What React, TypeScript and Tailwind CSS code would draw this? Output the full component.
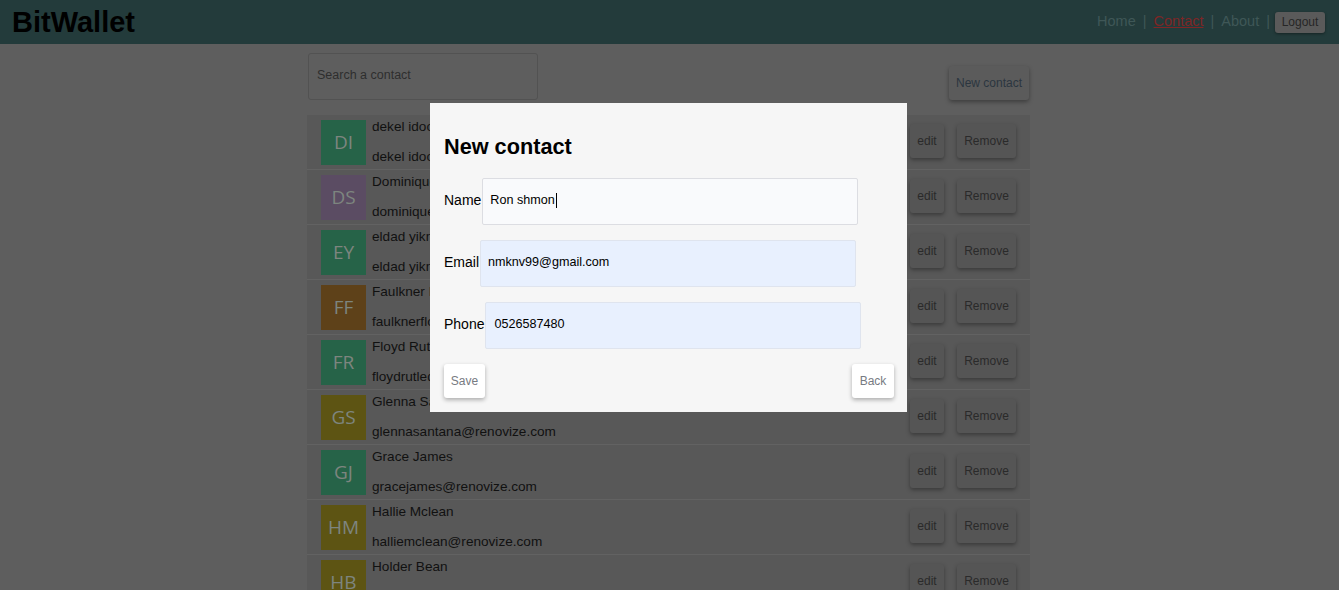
import React from "react";

const contacts = [
  { i: "DI", name: "dekel idoo", email: "dekel idoo@gmail.com", c: "bg-[#266348]" },
  { i: "DS", name: "Dominique Soto", email: "dominiquesoto@renovize.com", c: "bg-[#5b4c63]" },
  { i: "EY", name: "eldad yikne", email: "eldad yikne@gmail.com", c: "bg-[#266348]" },
  { i: "FF", name: "Faulkner Flores", email: "faulknerflores@renovize.com", c: "bg-[#5e4119]" },
  { i: "FR", name: "Floyd Rutledge", email: "floydrutledge@renovize.com", c: "bg-[#266348]" },
  { i: "GS", name: "Glenna Santana", email: "glennasantana@renovize.com", c: "bg-[#5d5413]" },
  { i: "GJ", name: "Grace James", email: "gracejames@renovize.com", c: "bg-[#266348]" },
  { i: "HM", name: "Hallie Mclean", email: "halliemclean@renovize.com", c: "bg-[#5d5413]" },
  { i: "HB", name: "Holder Bean", email: "holderbean@renovize.com", c: "bg-[#5d5413]" },
];

const font = { fontFamily: '"Liberation Sans", Arial, sans-serif' };

export default function App() {
  return (
    <div className="relative h-[590px] w-[1339px] overflow-hidden bg-[#5e5e5e]" style={font}>
      <header className="flex h-[44px] items-center justify-between bg-[#233b3b] pl-[12px] pr-[14px]">
        <h1 className="text-[29px] font-bold leading-none text-black">BitWallet</h1>
        <nav className="flex items-center text-[14.5px] text-[#3f5757]">
          <span>Home</span>
          <span className="mx-[7px]">|</span>
          <span className="text-[#7e2626] underline">Contact</span>
          <span className="mx-[7px]">|</span>
          <span>About</span>
          <span className="ml-[7px] mr-[5px]">|</span>
          <button className="h-[21px] w-[50px] rounded-[3px] bg-[#5a5a5a] text-[12px] text-[#262626] shadow-[0_1px_3px_rgba(0,0,0,0.4)]">
            Logout
          </button>
        </nav>
      </header>

      <main className="w-[723px] pt-[9px]" style={{ marginLeft: 307 }}>
        <div className="flex items-end justify-between pr-[1px]">
          <div className="ml-[1px] flex h-[47px] w-[230px] items-center rounded-[3px] border border-[#525252] pb-[2px] pl-[8px] text-[12.5px] text-[#2e2e2e]">
            Search a contact
          </div>
          <button className="h-[34px] rounded-[3px] bg-[#5b5b5b] px-[7px] text-[12px] text-[#2b3640] shadow-[0_2px_4px_rgba(0,0,0,0.35)]">
            New contact
          </button>
        </div>

        <ul className="mt-[15px] bg-[#585858]">
          {contacts.map((ct) => (
            <li
              key={ct.i}
              className="flex h-[55px] items-center border-b border-[#626262] pl-[14px] pr-[14px]"
            >
              <div
                className={`flex h-[45px] w-[45px] shrink-0 items-center justify-center text-[19px] text-[#7d857f] ${ct.c}`}
                style={{ fontFamily: '"Open Sans", sans-serif' }}
              >
                {ct.i}
              </div>
              <div className="ml-[6px] flex h-[55px] flex-1 flex-col pt-[3px] text-[13.6px] leading-[18px] text-[#111]">
                <span>{ct.name}</span>
                <span className="mt-[12px]">{ct.email}</span>
              </div>
              <div className="flex items-center gap-[13px] pb-[2px]">
                <button className="h-[34px] w-[34px] rounded-[3px] bg-[#555555] text-[12px] text-[#2a2a2a] shadow-[0_2px_4px_rgba(0,0,0,0.35)]">
                  edit
                </button>
                <button className="h-[34px] w-[59px] rounded-[3px] bg-[#555555] text-[12px] text-[#2a2a2a] shadow-[0_2px_4px_rgba(0,0,0,0.35)]">
                  Remove
                </button>
              </div>
            </li>
          ))}
        </ul>
      </main>

      <div className="absolute left-[430px] top-[103px] h-[309px] w-[477px] bg-[#f6f6f6] px-[14px]">
        <h2 className="mt-[32px] text-[21.7px] font-bold leading-[24px] text-black">New contact</h2>
        <div className="mt-[19px] flex flex-col gap-[15px] text-[14px] text-black">
          <div className="flex items-center">
            <span className="pb-[2px]">Name</span>
            <div className="ml-[1px] flex h-[47px] w-[376px] items-center rounded-[2px] border border-[#dcdde2] bg-[#f9fafc] pb-[2px] pl-[7px] text-[12.6px]">
              Ron shmon<span className="ml-[1px] inline-block h-[15px] w-[1px] bg-black" />
            </div>
          </div>
          <div className="flex items-center">
            <span className="pb-[2px]">Email</span>
            <div className="ml-[1px] flex h-[47px] w-[376px] items-center rounded-[2px] border border-[#dfe4ee] bg-[#e8f0fe] pb-[2px] pl-[7px] text-[12.6px]">
              nmknv99@gmail.com
            </div>
          </div>
          <div className="flex items-center">
            <span className="pb-[2px]">Phone</span>
            <div className="ml-[1px] flex h-[47px] w-[376px] items-center rounded-[2px] border border-[#dfe4ee] bg-[#e8f0fe] pb-[2px] pl-[8px] text-[12.6px]">
              0526587480
            </div>
          </div>
        </div>
        <div className="mt-[15px] flex justify-between">
          <button className="h-[34px] w-[41px] rounded-[3px] bg-white text-[12px] text-[#777b82] shadow-[0_2px_4px_rgba(0,0,0,0.3)]">
            Save
          </button>
          <button className="mr-[-1px] h-[34px] w-[42px] rounded-[3px] bg-white text-[12px] text-[#777b82] shadow-[0_2px_4px_rgba(0,0,0,0.3)]">
            Back
          </button>
        </div>
      </div>
    </div>
  );
}
